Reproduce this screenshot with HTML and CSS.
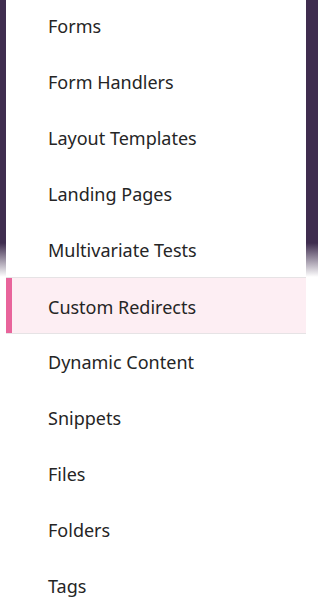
FILE: index.html
```html
<!DOCTYPE html>
<html lang="en">
<head>
  <meta charset="UTF-8">
  <title>Content Menu</title>
  <link rel="stylesheet" href="styles.css">
</head>
<body>
  <nav class="menu">
    <ul class="menu-list">
      <li class="menu-item">Forms</li>
      <li class="menu-item">Form Handlers</li>
      <li class="menu-item">Layout Templates</li>
      <li class="menu-item">Landing Pages</li>
      <li class="menu-item">Multivariate Tests</li>
      <li class="menu-item active">Custom Redirects</li>
      <li class="menu-item">Dynamic Content</li>
      <li class="menu-item">Snippets</li>
      <li class="menu-item">Files</li>
      <li class="menu-item">Folders</li>
      <li class="menu-item">Tags</li>
    </ul>
  </nav>
</body>
</html>
```

FILE: styles.css
```css
html, body {
  margin: 0;
  height: 100%;
}
body {
  background: linear-gradient(#3f2d4f 0, #3f2d4f 243px, #fff 277px);
  font-family: 'Noto Sans', sans-serif;
  color: #252525;
  overflow: hidden;
}
.menu {
  margin: 0 12px 0 6px;
  background: #fff;
}
.menu-list {
  list-style: none;
  margin: 0;
  padding: 0;
  position: relative;
  top: -3px;
}
.menu-item {
  height: 56px;
  display: flex;
  align-items: center;
  padding: 2px 0 0 42px;
  font-size: 18px;
  box-sizing: border-box;
}
.menu-item.active {
  height: 57px;
  margin-bottom: -1px;
  background: #fdeef3;
  border-top: 1px solid #e6e3e5;
  border-bottom: 1px solid #e6e3e5;
  box-shadow: inset 6px 0 #e8649b;
}
```
